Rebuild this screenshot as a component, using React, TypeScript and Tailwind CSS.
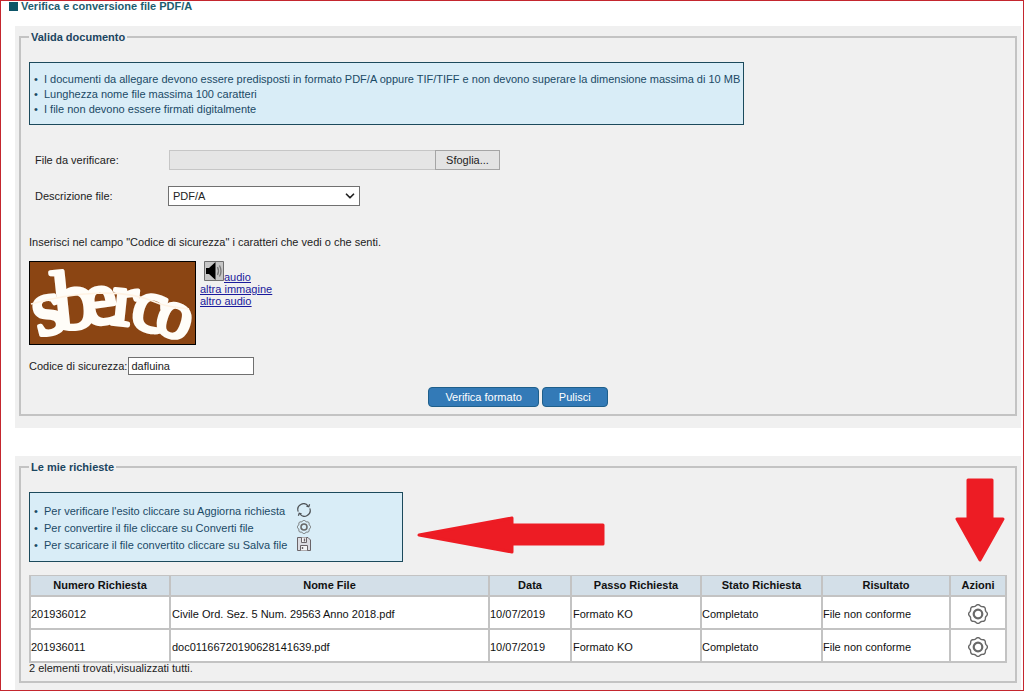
import React from 'react';
import { ChevronDown } from 'lucide-react';

const requests = [
  {
    id: '201936012',
    file: 'Civile Ord. Sez. 5 Num. 29563 Anno 2018.pdf',
    date: '10/07/2019',
    step: 'Formato KO',
    status: 'Completato',
    result: 'File non conforme',
  },
  {
    id: '201936011',
    file: 'doc01166720190628141639.pdf',
    date: '10/07/2019',
    step: 'Formato KO',
    status: 'Completato',
    result: 'File non conforme',
  },
];

const notes = [
  'I documenti da allegare devono essere predisposti in formato PDF/A oppure TIF/TIFF e non devono superare la dimensione massima di 10 MB',
  'Lunghezza nome file massima 100 caratteri',
  'I file non devono essere firmati digitalmente',
];

// scalloped outline, eight lobes
const gearPoints = Array.from({ length: 96 }, (_, i) => {
  const a = (i / 96) * Math.PI * 2;
  const r = 8.8 + 0.6 * Math.cos(a * 8);
  return `${(10 + r * Math.cos(a)).toFixed(2)},${(10 + r * Math.sin(a)).toFixed(2)}`;
}).join(' ');

function GearIcon({ className }: { className: string }) {
  return (
    <svg viewBox="0 0 20 20" className={className} fill="none" stroke="#686868" aria-hidden="true">
      <polygon points={gearPoints} strokeWidth="1.4" strokeLinejoin="round" />
      <circle cx="10" cy="10" r="4.3" strokeWidth="2.2" />
    </svg>
  );
}

function RefreshIcon() {
  return (
    <svg viewBox="0 0 14 14" className="mb-[3px] size-3.5" fill="none" stroke="#4f5357" strokeWidth="1.2" aria-hidden="true">
      <path d="M1.2 8.6A5.8 5.8 0 0 1 11.2 3" />
      <path d="M12.8 5.4A5.8 5.8 0 0 1 2.8 11" />
      <path d="M12.6 1.2L11.8 3.8L9.4 3.2M1.4 12.8L2.2 10.2L4.6 10.8" />
    </svg>
  );
}

function SaveIcon() {
  return (
    <svg viewBox="0 0 14 14" className="mb-[3px] size-3.5" fill="none" stroke="#6b6468" aria-hidden="true">
      <path d="M0.5 0.5H11L13.5 3V13.5H0.5Z" fill="#dcdce2" />
      <path d="M3.5 13.5V8.5H10.5V13.5" fill="#f4f4f6" />
      <path d="M4.5 0.5V5.5H9.5V0.5" fill="#f4f4f6" />
      <path d="M7.5 1.5V4.5M5.5 10V12" strokeWidth="1.4" />
    </svg>
  );
}

function SpeakerIcon() {
  return (
    <svg viewBox="0 0 20 20" className="size-5" fill="none" aria-hidden="true">
      <path d="M0.5 0.5H19.5V19.5H0.5Z" fill="#c6c6c6" stroke="#6f6f6f" />
      <path d="M2 7H5L11.5 1V19L5 13H2Z" fill="#000" />
      <path d="M13.5 6Q15.5 10 13.5 14M15.5 4.5Q18.5 10 15.5 15.5" stroke="#777" strokeWidth="1.3" />
    </svg>
  );
}

const captchaLetters = [
  { c: 's', x: 4, y: 73, r: -14, size: 80 },
  { c: 'b', x: 25, y: 68, r: -6, size: 84 },
  { c: 'e', x: 54, y: 63, r: -8, size: 76 },
  { c: 'r', x: 83, y: 64, r: 6, size: 76 },
  { c: 'c', x: 104, y: 69, r: 14, size: 76 },
  { c: 'o', x: 129, y: 75, r: 18, size: 70 },
];

function Captcha() {
  return (
    <svg viewBox="0 0 167 84" className="h-21 w-[167px] shrink-0" role="img" aria-label="Codice di sicurezza">
      <rect x="0.5" y="0.5" width="166" height="83" fill="#8b4513" stroke="#000" />
      <g className="font-['Liberation_Serif',serif]" fill="#fffdf8" stroke="#fffdf8" strokeWidth="4" strokeLinejoin="round">
        {captchaLetters.map((l) => (
          <text key={l.c} x={l.x} y={l.y} fontSize={l.size} transform={`rotate(${l.r} ${l.x + 14} ${l.y - 20})`}>
            {l.c}
          </text>
        ))}
      </g>
      <path d="M2 43C45 31 95 27 126 41C140 47 150 46 160 48" fill="none" stroke="#fff3e4" strokeWidth="1.6" />
    </svg>
  );
}

function Panel({ title, children }: { title: string; children: React.ReactNode }) {
  return (
    <section className="bg-[#f0f0f0] px-1 pt-[3px]">
      <fieldset className="min-w-0 border-2 border-[#c3c3c3] px-2">
        <legend className="px-0.5 font-bold leading-4 text-[#1b4560]">{title}</legend>
        {children}
      </fieldset>
    </section>
  );
}

function Bullet({ children }: { children: React.ReactNode }) {
  return (
    <li className="flex items-center">
      <span className="w-2.5 shrink-0">•</span>
      {children}
    </li>
  );
}

const blueButton =
  'h-5 rounded border border-[#1f5f8b] bg-[#337ab7] px-4 leading-4 text-white cursor-pointer';

export default function App() {
  return (
    <main className="flex min-h-screen flex-col border border-[#c4262e] bg-white pl-3.5 pr-0.5 font-['Liberation_Sans',Arial,sans-serif] text-[11px] leading-4 text-[#222]">
      <h1 className="-ml-1.5 flex h-[25px] items-start gap-[3px] font-bold leading-[10px] text-[#1c5d70]">
        <span className="mt-px size-[9px] bg-[#0d5568]" />
        Verifica e conversione file PDF/A
      </h1>

      <Panel title="Valida documento">
        <ul className="mt-[17px] w-fit min-w-[715px] whitespace-nowrap border border-[#1c4a5c] bg-[#d9edf7] pb-[7px] pl-1 pt-[9px] leading-[15px] text-[#1b4a66]">
          {notes.map((n) => (
            <Bullet key={n}>{n}</Bullet>
          ))}
        </ul>

        {/* file selection */}
        <div className="mt-[25px] flex items-center pl-1.5">
          <label htmlFor="file" className="w-[134px]">File da verificare:</label>
          <input id="file" type="text" readOnly className="h-5 w-[266px] border border-r-0 border-[#c6c6c6] bg-[#e5e5e5] px-1" />
          <button type="button" className="h-5 w-[65px] border border-[#a5a5a5] bg-[#e3e3e3]">Sfoglia...</button>
        </div>
        <div className="mt-4 flex items-center pl-1.5">
          <label htmlFor="description" className="w-[133px]">Descrizione file:</label>
          <div className="relative">
            <select id="description" className="block h-5 w-48 appearance-none border border-[#707070] bg-white px-1 leading-4">
              <option>PDF/A</option>
            </select>
            <ChevronDown className="pointer-events-none absolute right-[3px] top-[3px] size-3.5" strokeWidth={3} />
          </div>
        </div>

        {/* security code */}
        <p className="mt-7">Inserisci nel campo "Codice di sicurezza" i caratteri che vedi o che senti.</p>
        <div className="mt-[11px] flex gap-1">
          <Captcha />
          <div className="flex flex-col items-start leading-3 text-[#1a1a9c] underline">
            <a href="#audio" className="flex items-end pl-1">
              <SpeakerIcon />
              <span className="-mb-0.5 underline">audio</span>
            </a>
            <a href="#altra-immagine" className="mt-0.5">altra immagine</a>
            <a href="#altro-audio">altro audio</a>
          </div>
        </div>
        <div className="mt-3 flex items-center gap-px">
          <label htmlFor="code">Codice di sicurezza:</label>
          <input id="code" type="text" defaultValue="dafluina" className="h-[18px] w-[126px] border border-[#707070] bg-white px-0.5" />
        </div>
        <div className="mb-[7px] mt-3 flex justify-center gap-[3px]">
          <button type="submit" className={blueButton}>Verifica formato</button>
          <button type="reset" className={blueButton}>Pulisci</button>
        </div>
      </Panel>
      <div className="h-3 bg-[#f0f0f0]" />

      <div className="mt-7 grow bg-[#f0f0f0]">
        <Panel title="Le mie richieste">
          <div className="mt-[3px] flex items-end">
            <ul className="flex w-[374px] flex-col border border-[#1c4a5c] bg-[#d9edf7] px-1 pb-[7px] pt-2.5 leading-[17px] text-[#1b4a66]">
              <Bullet>
                <span className="w-[253px]">Per verificare l'esito cliccare su Aggiorna richiesta</span>
                <RefreshIcon />
              </Bullet>
              <Bullet>
                <span className="w-[253px]">Per convertire il file cliccare su Converti file</span>
                <GearIcon className="mb-[3px] size-3.5" />
              </Bullet>
              <Bullet>
                <span className="w-[253px]">Per scaricare il file convertito cliccare su Salva file</span>
                <SaveIcon />
              </Bullet>
            </ul>
            <svg viewBox="0 0 188 38" className="mb-2 ml-3.5 h-[38px] w-[188px]" aria-hidden="true">
              <path d="M2 19L95 2V9H186V28H95V36Z" fill="#ed1c24" stroke="#ed1c24" strokeWidth="3" strokeLinejoin="round" />
            </svg>
            <svg viewBox="0 0 50 84" className="ml-auto mr-0.5 h-21 w-[50px]" aria-hidden="true">
              <path d="M13 2H37V41H48L25 82L2 41H13Z" fill="#ed1c24" stroke="#ed1c24" strokeWidth="3" strokeLinejoin="round" />
            </svg>
          </div>

          <table className="mt-[13px] w-full table-fixed border-collapse border border-[#c3c3c3] text-[#111]">
            <thead>
              <tr className="h-5 bg-[#d3dfe8] *:border *:border-[#c3c3c3] *:border-x-2">
                <th className="w-[140px]">Numero Richiesta</th>
                <th>Nome File</th>
                <th className="w-[82px]">Data</th>
                <th className="w-[130px]">Passo Richiesta</th>
                <th className="w-[121px]">Stato Richiesta</th>
                <th className="w-32">Risultato</th>
                <th className="w-14">Azioni</th>
              </tr>
            </thead>
            <tbody>
              {requests.map((r) => (
                <tr key={r.id} className="h-[33px] bg-white *:border-2 *:border-[#c3c3c3] *:pt-1">
                  <td>{r.id}</td>
                  <td className="pl-px">{r.file}</td>
                  <td>{r.date}</td>
                  <td className="pl-px">{r.step}</td>
                  <td>{r.status}</td>
                  <td>{r.result}</td>
                  <td>
                    <button type="button" aria-label="Converti file" className="mx-auto block cursor-pointer">
                      <GearIcon className="size-5" />
                    </button>
                  </td>
                </tr>
              ))}
            </tbody>
          </table>
          <p className="mb-2 leading-[10px]">2 elementi trovati,visualizzati tutti.</p>
        </Panel>
      </div>
    </main>
  );
}
